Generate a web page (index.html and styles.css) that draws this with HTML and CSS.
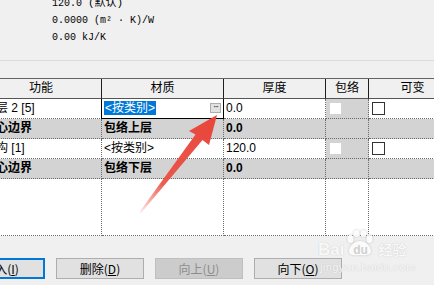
FILE: index.html
```html
<!DOCTYPE html>
<html lang="zh-CN">
<head>
    <meta charset="UTF-8">
    <title>编辑部件</title>
    <link rel="stylesheet" href="styles.css">
</head>
<body>
    <div class="props">
        <div class="prop-line">120.0 <span class="cjk">(默认)</span></div>
        <div class="prop-line">0.0000 (m² · K)/W</div>
        <div class="prop-line">0.00 kJ/K</div>
    </div>

    <div class="layers">
        <div class="row head">
            <div class="cell">功能</div>
            <div class="cell">材质</div>
            <div class="cell">厚度</div>
            <div class="cell">包络</div>
            <div class="cell">可变</div>
        </div>
        <div class="row">
            <div class="cell">面层 2 [5]</div>
            <div class="cell active">
                <span class="picked">&lt;按类别&gt;</span>
                <span class="browse">···</span>
            </div>
            <div class="cell">0.0</div>
            <div class="cell shaded"><span class="box off"></span></div>
            <div class="cell"><span class="box"></span></div>
        </div>
        <div class="row core">
            <div class="cell">核心边界</div>
            <div class="cell">包络上层</div>
            <div class="cell">0.0</div>
            <div class="cell"></div>
            <div class="cell"></div>
        </div>
        <div class="row">
            <div class="cell">结构 [1]</div>
            <div class="cell">&lt;按类别&gt;</div>
            <div class="cell">120.0</div>
            <div class="cell shaded"><span class="box off"></span></div>
            <div class="cell"><span class="box"></span></div>
        </div>
        <div class="row core">
            <div class="cell">核心边界</div>
            <div class="cell">包络下层</div>
            <div class="cell">0.0</div>
            <div class="cell"></div>
            <div class="cell"></div>
        </div>
        <div class="row filler">
            <div class="cell"></div>
            <div class="cell"></div>
            <div class="cell"></div>
            <div class="cell"></div>
            <div class="cell"></div>
        </div>
    </div>

    <div class="actions">
        <div class="btn focus">插入(<u>I</u>)</div>
        <div class="btn">删除(<u>D</u>)</div>
        <div class="btn off">向上(<u>U</u>)</div>
        <div class="btn">向下(<u>O</u>)</div>
    </div>

    <!-- watermark -->
    <div class="mark">
        <div class="mark-logo">
            <span>Bai</span>
            <span class="paw-wrap">
                <svg class="paw" width="30" height="27" viewBox="0 0 30 27">
                    <ellipse cx="5.5" cy="9" rx="3" ry="4" />
                    <ellipse cx="11.5" cy="3.5" rx="3" ry="3.5" />
                    <ellipse cx="18.5" cy="3.5" rx="3" ry="3.5" />
                    <ellipse cx="24.5" cy="9" rx="3" ry="4" />
                    <path d="M15 11 C9 11 4 17 4 21 C4 25 9 26 15 25 C21 26 26 25 26 21 C26 17 21 11 15 11 Z" />
                </svg>
                <span class="du">du</span>
            </span>
            <span class="jy">经验</span>
        </div>
        <div class="mark-url">jingyan.baidu.com</div>
    </div>

    <!-- red pointer arrow -->
    <svg class="pointer" width="434" height="285" viewBox="0 0 434 285">
        <defs>
            <linearGradient id="fade" x1="140" y1="213" x2="216" y2="116" gradientUnits="userSpaceOnUse">
                <stop offset="0" stop-color="#ea4a3c" stop-opacity="0.1" />
                <stop offset="0.3" stop-color="#ea4a3c" stop-opacity="0.9" />
                <stop offset="1" stop-color="#e9443a" />
            </linearGradient>
        </defs>
        <polygon fill="url(#fade)" points="217,115 209,145 202.5,140 141,213 139.5,212 195.5,134.5 189,131" />
    </svg>
</body>
</html>
```

FILE: styles.css
```css
/* dialog look */
:root {
    --dialog-bg: #f0f0f0;
    --cell-gray: #d3d3d3;
    --grid-dots: #6a6a6a;
    --select-blue: #0078d7;
}

* {
    margin: 0;
    padding: 0;
    box-sizing: border-box;
}

body {
    position: relative;
    width: 434px;
    height: 285px;
    overflow: hidden;
    background-color: var(--dialog-bg);
    font-family: 'Liberation Sans', 'Noto Sans CJK SC', sans-serif;
    font-size: 12px;
    color: #000;
}

.props {
    margin-top: -5px;
    padding: 0 0 14px 52px;
    border-bottom: 1px solid #dadada;
}

.prop-line {
    font-family: 'Liberation Mono', 'Noto Sans CJK SC', monospace;
    font-size: 10px;
    line-height: 17px;
}

.prop-line .cjk {
    font-size: 11px;
}

.layers {
    margin: 17px 0 0 -19px;
    width: 476px;
    border-top: 1px solid #646464;
    background-color: #fff;
}

.row {
    display: grid;
    grid-template-columns: 121px 122px 102px 43px 88px;
}

.cell {
    position: relative;
    height: 20px;
    line-height: 19px;
    padding-left: 2px;
    white-space: nowrap;
    overflow: hidden;
    border-right: 1px dotted var(--grid-dots);
    border-bottom: 1px dotted var(--grid-dots);
}

.row .cell:first-child {
    padding-left: 3px;
}

.row.head .cell {
    background-color: var(--dialog-bg);
    text-align: center;
    padding-left: 0;
    border-right: 1px solid #1e1e1e;
    border-bottom: 1px solid #555;
}

.row.core .cell {
    background-color: var(--cell-gray);
    font-weight: bold;
}

.cell.shaded {
    background-color: var(--cell-gray);
}

.cell.active {
    border-right: 1px solid #000;
    border-bottom: 1px solid #000;
    box-shadow: -1px 0 0 #000;
}

.picked {
    display: inline-block;
    height: 14px;
    line-height: 14px;
    margin-top: 1px;
    padding: 0 1px;
    background-color: var(--select-blue);
    color: #fff;
}

.browse {
    position: absolute;
    top: 4px;
    right: 2px;
    width: 11px;
    height: 10px;
    line-height: 8px;
    font-family: 'DejaVu Sans', sans-serif;
    font-size: 8px;
    letter-spacing: -1px;
    text-align: center;
    background-color: #e1e1e1;
    border: 1px solid #adadad;
    color: #222;
}

.box {
    display: block;
    width: 13px;
    height: 13px;
    margin: 3px 0 0 1px;
    background-color: #fff;
    border: 1px solid #333;
}

.box.off {
    width: 11px;
    height: 11px;
    margin: 4px 0 0 2px;
    border: none;
}

.row.filler .cell {
    height: 57px;
}

.actions {
    display: flex;
    gap: 11px;
    margin: 22px 0 0 -43px;
}

.btn {
    display: flex;
    justify-content: center;
    align-items: center;
    width: 88px;
    height: 21px;
    background-color: #e1e1e1;
    border: 1px solid #adadad;
    font-family: 'Noto Sans CJK SC', sans-serif;
    font-size: 12px;
}

.btn u {
    text-underline-offset: 1px;
}

.btn.focus {
    border: 2px solid var(--select-blue);
}

.btn.off {
    background-color: #cccccc;
    border-color: #bfbfbf;
    color: #8d8d8d;
}

.mark {
    position: absolute;
    left: 318px;
    top: 230px;
    color: rgba(255, 255, 255, 0.92);
    text-shadow: 0 0 1px rgba(150, 150, 150, 0.6);
    pointer-events: none;
}

.mark-logo {
    display: flex;
    align-items: flex-end;
    height: 28px;
    font-family: 'Liberation Sans', sans-serif;
    font-weight: bold;
    font-size: 17px;
    line-height: 17px;
}

.paw-wrap {
    position: relative;
    width: 30px;
    height: 28px;
    margin-left: 1px;
}

.paw {
    display: block;
    fill: rgba(255, 255, 255, 0.92);
    filter: drop-shadow(0 0 1px rgba(150, 150, 150, 0.6));
}

.du {
    position: absolute;
    left: 0;
    bottom: 2px;
    width: 30px;
    font-size: 12px;
    line-height: 12px;
    color: rgba(205, 205, 205, 0.95);
    text-align: center;
    text-shadow: none;
}

.jy {
    margin-left: 3px;
    font-family: 'Noto Sans CJK SC', sans-serif;
    font-size: 14px;
}

.mark-url {
    margin-top: 3px;
    padding-left: 2px;
    font-family: 'Liberation Sans', sans-serif;
    font-size: 11px;
    letter-spacing: 0.4px;
}

.pointer {
    position: absolute;
    top: 0;
    left: 0;
    pointer-events: none;
}
```
